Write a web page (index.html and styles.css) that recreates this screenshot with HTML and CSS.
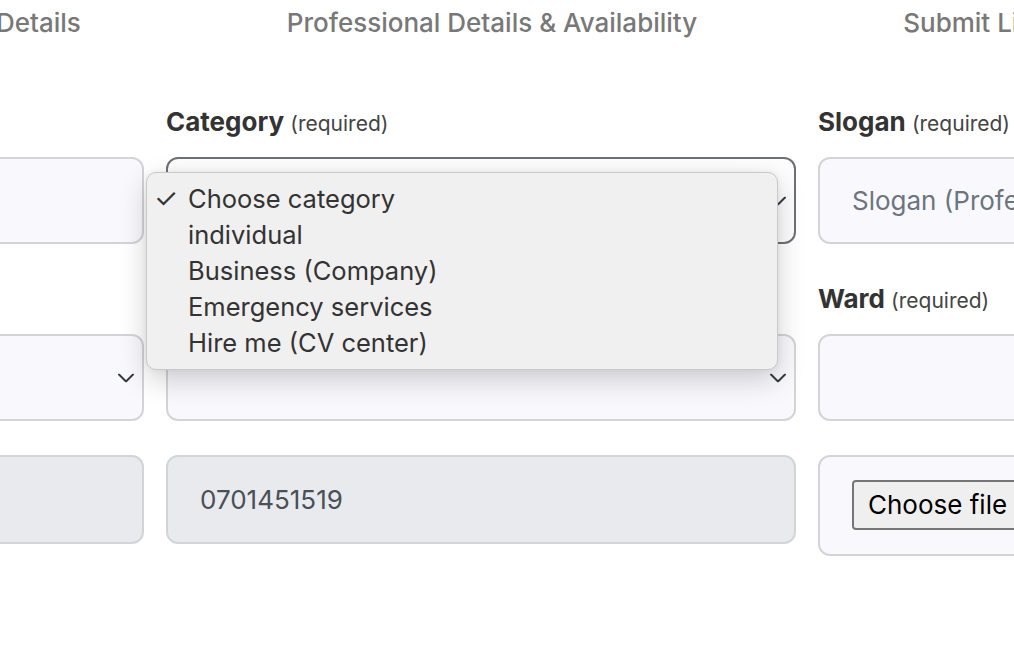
FILE: index.html
```html
<!DOCTYPE html>
<html lang="en">
<head>
<meta charset="utf-8">
<title>Professional Details</title>
<link rel="stylesheet" href="styles.css">
</head>
<body>
<div class="page">
  <div class="steps">
    <div class="step step-first">Personal Details</div>
    <div class="step">Professional Details &amp; Availability</div>
    <div class="step step-last">Submit Listing</div>
  </div>

  <form class="form-grid">
    <div class="field">
      <label class="label">Full name <span class="req">(required)</span></label>
      <div class="control"></div>
    </div>
    <div class="field">
      <label class="label">Category <span class="req">(required)</span></label>
      <div class="control select focused">
        <svg class="chev" viewBox="0 0 16 9" width="16" height="9"><path d="M1 1l7 7 7-7" fill="none" stroke="#343a40" stroke-width="2" stroke-linecap="round" stroke-linejoin="round"/></svg>
      </div>
      <div class="popup">
        <div class="opt"><span class="tick">✓</span>Choose category</div>
        <div class="opt"><span class="tick"></span>individual</div>
        <div class="opt"><span class="tick"></span>Business (Company)</div>
        <div class="opt"><span class="tick"></span>Emergency services</div>
        <div class="opt"><span class="tick"></span>Hire me (CV center)</div>
      </div>
    </div>
    <div class="field">
      <label class="label">Slogan <span class="req">(required)</span></label>
      <div class="control"><span class="placeholder">Slogan (Professional tagline)</span></div>
    </div>

    <div class="field">
      <label class="label">County <span class="req">(required)</span></label>
      <div class="control select">
        <svg class="chev" viewBox="0 0 16 9" width="16" height="9"><path d="M1 1l7 7 7-7" fill="none" stroke="#343a40" stroke-width="2" stroke-linecap="round" stroke-linejoin="round"/></svg>
      </div>
    </div>
    <div class="field">
      <label class="label">Sub-county <span class="req">(required)</span></label>
      <div class="control select">
        <svg class="chev" viewBox="0 0 16 9" width="16" height="9"><path d="M1 1l7 7 7-7" fill="none" stroke="#343a40" stroke-width="2" stroke-linecap="round" stroke-linejoin="round"/></svg>
      </div>
    </div>
    <div class="field">
      <label class="label">Ward <span class="req">(required)</span></label>
      <div class="control"></div>
    </div>

    <div class="field">
      <div class="control disabled"></div>
    </div>
    <div class="field">
      <div class="control disabled"><span class="value">0701451519</span></div>
    </div>
    <div class="field">
      <div class="control file"><span class="file-btn">Choose file</span><span class="file-name">No file chosen</span></div>
    </div>
  </form>
</div>
</body>
</html>
```

FILE: styles.css
```css
html, body {
  margin: 0;
  padding: 0;
  background: #ffffff;
}
body {
  width: 1014px;
  height: 670px;
  overflow: hidden;
  font-family: Inter, "Noto Sans", "Liberation Sans", sans-serif;
  color: #333;
}
.page {
  width: 1014px;
}
.steps {
  display: grid;
  grid-template-columns: 1fr auto 1fr;
  column-gap: 206px;
  width: 1984px;
  margin-left: -500px;
  height: 44px;
  align-items: center;
}
.step {
  font-size: 26px;
  font-weight: 500;
  color: #787878;
  white-space: nowrap;
}
.step-first {
  text-align: right;
}
.step-last {
  text-align: left;
}
.form-grid {
  display: grid;
  grid-template-columns: repeat(3, 630px);
  column-gap: 22px;
  row-gap: 34px;
  margin: 57px 0 0 -486px;
  width: 1934px;
}
.field {
  position: relative;
  display: flex;
  flex-direction: column;
}
.label {
  height: 42px;
  line-height: 42px;
  margin-bottom: 14px;
  font-size: 26px;
  font-weight: 700;
  color: #333;
  white-space: nowrap;
}
.req {
  font-size: 21px;
  font-weight: 400;
  color: #444;
}
.control {
  position: relative;
  box-sizing: border-box;
  height: 87px;
  border: 2px solid #d3d4d8;
  border-radius: 12px;
  background: #f9f9fd;
  display: flex;
  align-items: center;
  padding: 0 32px;
  font-size: 26px;
  white-space: nowrap;
  overflow: hidden;
}
.control.focused {
  border-color: #6d7075;
  background: #fdfdfd;
}
.control.disabled {
  background: #e8eaed;
  height: 89px;
}
.control.file {
  height: 101px;
  align-items: flex-start;
  padding-top: 23px;
}
.placeholder {
  color: #6c757d;
}
.value {
  color: #495057;
}
.chev {
  position: absolute;
  right: 8px;
  top: 50%;
  transform: translateY(-50%);
}
.file-btn {
  box-sizing: border-box;
  height: 50px;
  line-height: 46px;
  padding: 0 14px;
  border: 2px solid #767676;
  border-radius: 4px;
  background: #efefef;
  color: #000;
  font-size: 26px;
  margin-right: 12px;
}
.file-name {
  line-height: 50px;
  color: #000;
}
.popup {
  position: absolute;
  left: -20px;
  top: 71px;
  width: 632px;
  box-sizing: border-box;
  padding: 7px 0 9px;
  background: #f0f0f0;
  border: 1px solid #c9c9c9;
  border-radius: 10px;
  box-shadow: 0 10px 28px rgba(0, 0, 0, 0.18), 0 0 6px rgba(0, 0, 0, 0.06);
  z-index: 10;
}
.opt {
  display: flex;
  align-items: center;
  height: 36px;
  font-size: 25.5px;
  color: #333;
  white-space: nowrap;
}
.tick {
  display: inline-block;
  padding-left: 7px;
  box-sizing: border-box;
  width: 41px;
  font-size: 27px;
  color: #333;
}
```
